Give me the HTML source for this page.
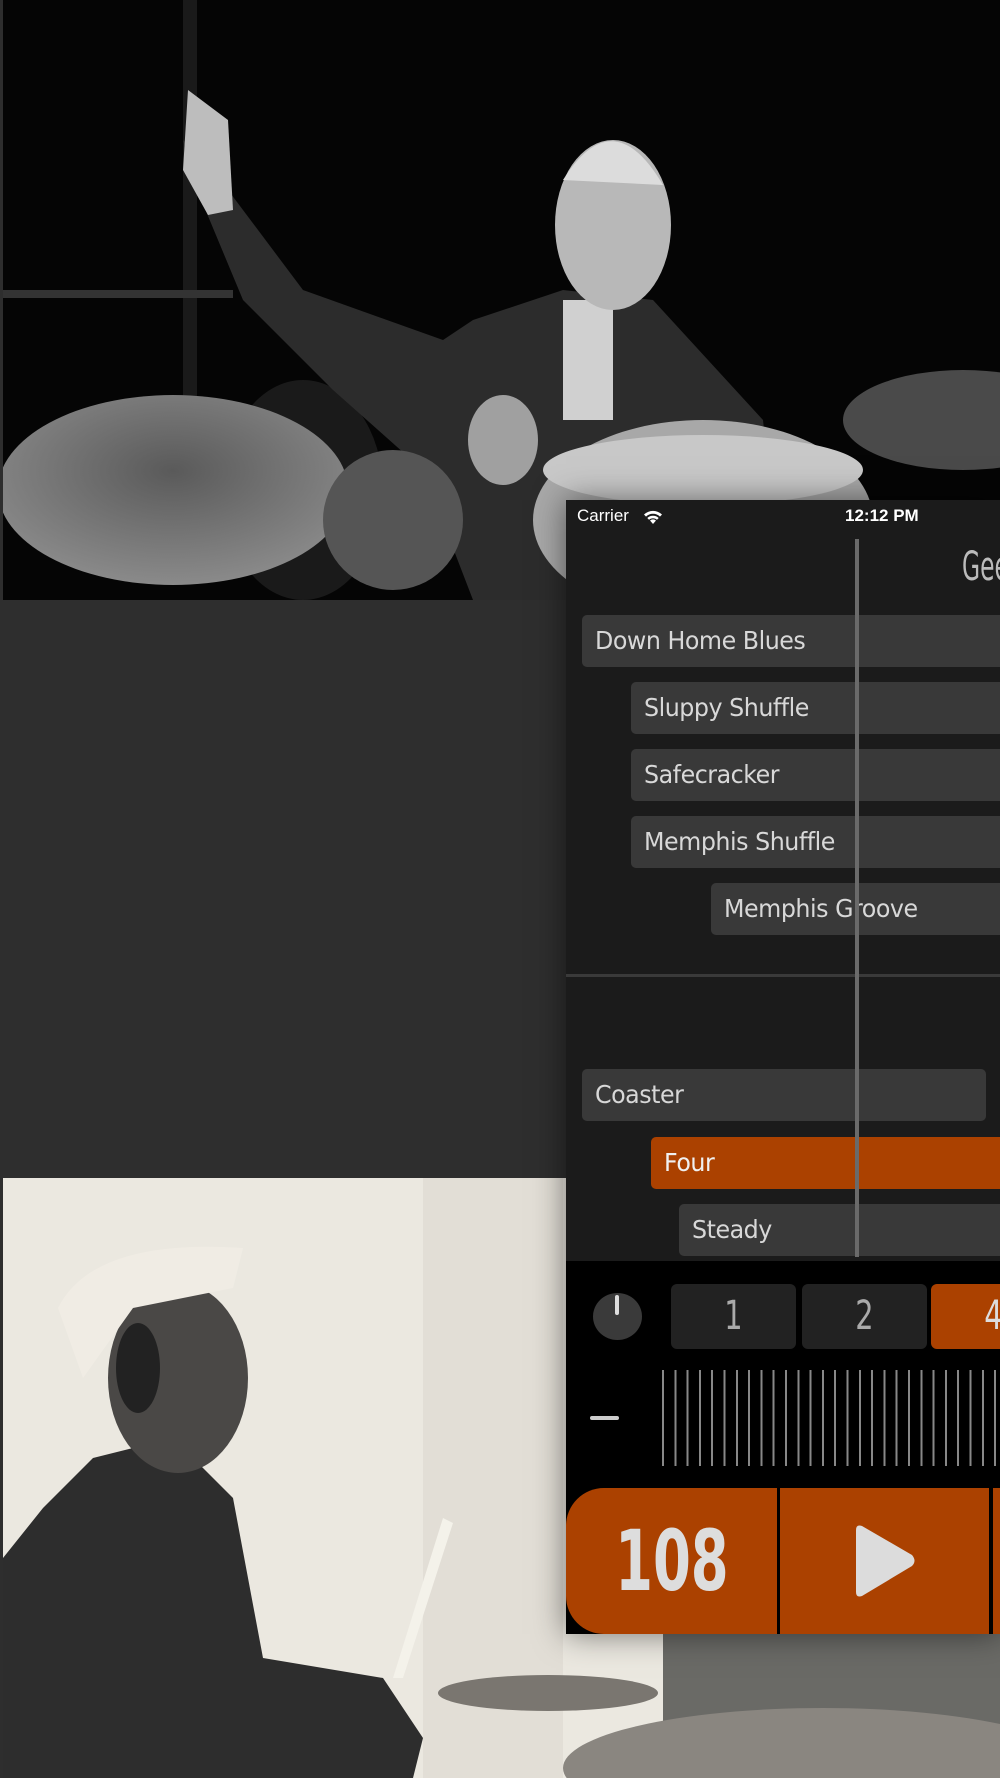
<!DOCTYPE html>
<html><head><meta charset="utf-8"><style>
*{margin:0;padding:0;box-sizing:border-box}
body{width:1000px;height:1778px;background:#2e2e2e;position:relative;overflow:hidden;font-family:"Liberation Sans",sans-serif}
.abs{position:absolute}
.row{position:absolute;height:52px;background:#393939;border-radius:5px;color:#d8d8d8;font-size:25px;line-height:52px;padding-left:13px;right:-10px;font-family:"DejaVu Sans","Liberation Sans",sans-serif;letter-spacing:-0.5px}
.row span{display:inline-block;transform:scaleX(.95);transform-origin:left}
.btn{position:absolute;height:65px;width:125px;background:#222;border-radius:6px;color:#aaa;font-size:40px;text-align:center;line-height:65px;font-family:"DejaVu Sans Condensed","Liberation Sans",sans-serif}
.btn span{display:inline-block;transform:scaleX(.8)}
</style></head><body>
<svg class="abs" style="left:3px;top:0" width="997" height="600" viewBox="0 0 997 600">
<defs><radialGradient id="cy" cx="0.5" cy="0.4" r="0.6"><stop offset="0" stop-color="#5a5a5a"/><stop offset="1" stop-color="#8a8a8a"/></radialGradient></defs>
<rect width="997" height="600" fill="#050505"/>
<rect x="180" y="0" width="14" height="400" fill="#1a1a1a"/>
<rect x="0" y="290" width="230" height="8" fill="#333"/>
<ellipse cx="300" cy="490" rx="80" ry="110" fill="#1a1a1a"/>
<path d="M180 140 L210 170 L300 290 L440 340 L470 320 L560 290 L650 300 L760 420 L780 600 L470 600 L420 470 L330 390 L240 300 L190 180 Z" fill="#2c2c2c"/>
<path d="M185 90 L225 120 L230 210 L205 215 L180 170 Z" fill="#bdbdbd"/>
<rect x="560" y="300" width="50" height="120" fill="#d0d0d0"/>
<ellipse cx="610" cy="225" rx="58" ry="85" fill="#b8b8b8"/>
<path d="M560 180 Q610 100 660 185 Z" fill="#dcdcdc"/>
<ellipse cx="170" cy="490" rx="175" ry="95" fill="url(#cy)"/>
<ellipse cx="700" cy="520" rx="170" ry="100" fill="#a8a8a8"/>
<ellipse cx="700" cy="470" rx="160" ry="35" fill="#c8c8c8"/>
<ellipse cx="960" cy="420" rx="120" ry="50" fill="#4a4a4a"/>
<ellipse cx="390" cy="520" rx="70" ry="70" fill="#555"/>
<ellipse cx="500" cy="440" rx="35" ry="45" fill="#a0a0a0"/>
</svg>
<svg class="abs" style="left:3px;top:1178px" width="997" height="600" viewBox="0 0 997 600">
<rect width="997" height="600" fill="#ebe8e0"/>
<rect x="420" y="0" width="140" height="600" fill="#e2ded6"/>
<rect x="660" y="440" width="340" height="160" fill="#6a6a66"/>
<path d="M40 330 L90 280 L170 260 L230 320 L260 480 L380 500 L420 560 L410 600 L0 600 L0 380 Z" fill="#2d2d2d"/>
<ellipse cx="175" cy="200" rx="70" ry="95" fill="#4a4846"/>
<path d="M55 130 Q90 60 240 70 L230 110 L130 130 L80 200 Z" fill="#f0ece4"/>
<ellipse cx="135" cy="190" rx="22" ry="45" fill="#222"/>
<path d="M440 340 L450 345 L400 500 L390 500 Z" fill="#f4f2ea"/>
<ellipse cx="545" cy="515" rx="110" ry="18" fill="#7a7670"/>
<ellipse cx="820" cy="590" rx="260" ry="60" fill="#8a8680"/>
</svg>
<div class="abs" style="left:566px;top:500px;width:434px;height:1134px;background:#1b1b1b;box-shadow:0 0 30px rgba(0,0,0,.5);overflow:hidden">
 <div class="abs" style="left:11px;top:6px;color:#fff;font-size:17px">Carrier</div>
 <svg class="abs" style="left:76px;top:8px" width="22" height="16" viewBox="0 0 22 16"><path d="M11 16 L14 12.5 A5 5 0 0 0 8 12.5 Z M2 6.5 A13 13 0 0 1 20 6.5 L18 8.6 A10 10 0 0 0 4 8.6 Z M5.3 10 A8.5 8.5 0 0 1 16.7 10 L15 11.8 A6 6 0 0 0 7 11.8 Z" fill="#fff"/></svg>
 <div class="abs" style="left:279px;top:6px;color:#fff;font-size:17px;font-weight:bold">12:12 PM</div>
 <div class="abs" style="left:396px;top:44px;color:#bbb;font-size:40px;font-family:'DejaVu Sans Condensed',sans-serif;transform:scaleX(.65);transform-origin:left">Gee</div>
 <div class="row" style="left:16px;top:115px"><span>Down Home Blues</span></div>
 <div class="row" style="left:65px;top:182px"><span>Sluppy Shuffle</span></div>
 <div class="row" style="left:65px;top:249px"><span>Safecracker</span></div>
 <div class="row" style="left:65px;top:316px"><span>Memphis Shuffle</span></div>
 <div class="row" style="left:145px;top:383px"><span>Memphis Groove</span></div>
 <div class="abs" style="left:0;top:474px;width:434px;height:3px;background:#3a3a3a"></div>
 <div class="row" style="left:16px;top:569px;right:14px"><span>Coaster</span></div>
 <div class="row" style="left:85px;top:637px;background:#ab4100;color:#f0f0f0"><span>Four</span></div>
 <div class="row" style="left:113px;top:704px"><span>Steady</span></div>
 <div class="abs" style="left:289px;top:39px;width:4px;height:718px;background:#6a6a6a"></div>
 <div class="abs" style="left:0;top:761px;width:434px;height:373px;background:#000"></div>
 <div class="abs" style="left:27px;top:793px;width:49px;height:47px;border-radius:50%;background:#3a3a3a"></div>
 <div class="abs" style="left:49px;top:795px;width:4px;height:20px;border-radius:2px;background:#ddd"></div>
 <div class="btn" style="left:105px;top:784px"><span>1</span></div>
 <div class="btn" style="left:236px;top:784px"><span>2</span></div>
 <div class="btn" style="left:365px;top:784px;background:#ab4100;color:#ddd"><span>4</span></div>
 <div class="abs" style="left:24px;top:916px;width:29px;height:4px;background:#ccc;border-radius:2px"></div>
 <div class="abs" style="left:96px;top:870px;width:340px;height:96px;background:repeating-linear-gradient(90deg,#888 0 2px,transparent 2px 12.3px)"></div>
 <div class="abs" style="left:0;top:988px;width:211px;height:146px;background:#ab4100;border-top-left-radius:38px;border-bottom-left-radius:38px;color:#ddd;font-size:84px;font-weight:bold;text-align:center;line-height:146px;font-family:'DejaVu Sans Condensed',sans-serif"><span style="display:inline-block;transform:scaleX(.72)">108</span></div>
 <div class="abs" style="left:214px;top:988px;width:209px;height:146px;background:#ab4100"></div>
 <svg class="abs" style="left:287px;top:1024px" width="64" height="74"><path d="M3 6 Q3 0 9 2 L59 31 Q64 37 59 42 L9 72 Q3 74 3 68 Z" fill="#dcdcdc"/></svg>
 <div class="abs" style="left:427px;top:988px;width:20px;height:146px;background:#ab4100"></div>
</div>
</body></html>
